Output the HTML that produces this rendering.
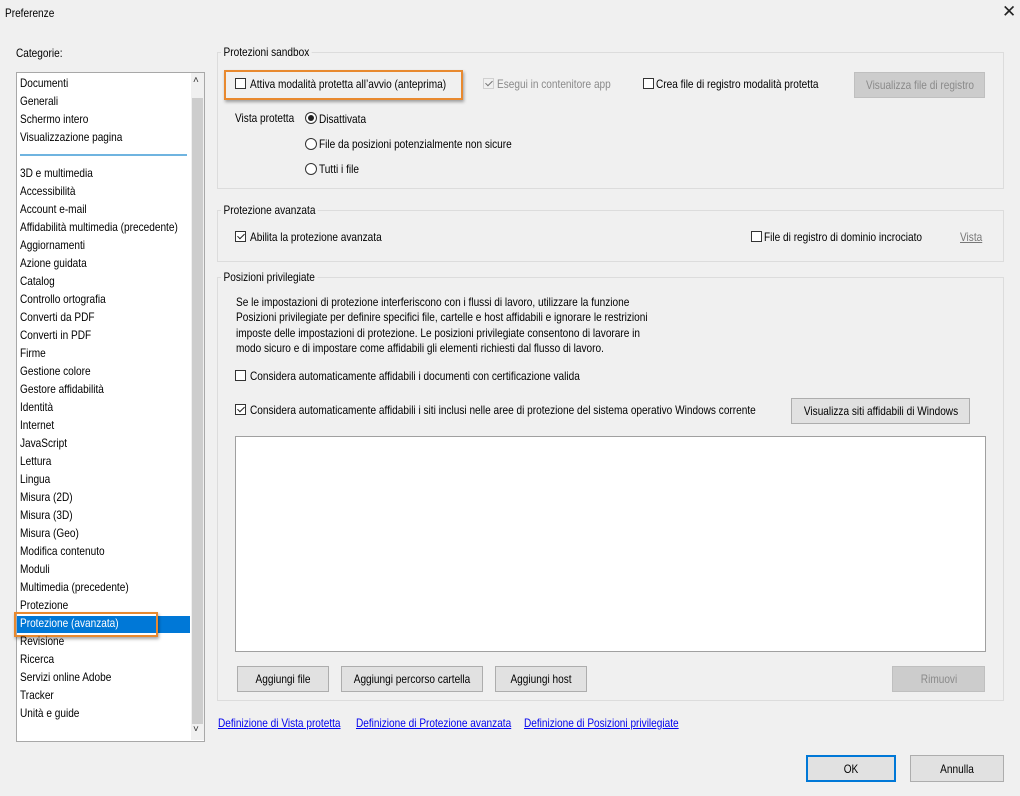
<!DOCTYPE html>
<html><head><meta charset="utf-8"><style>
body{margin:0;width:1020px;height:796px;background:#f0f0f0;position:relative;overflow:hidden;font-family:"Liberation Sans",sans-serif;font-size:12px;color:#000}
.t{position:absolute;white-space:nowrap;line-height:14px;transform:scaleX(.84);transform-origin:0 50%}
.g{position:absolute;border:1px solid #dcdcdc;box-sizing:border-box}
.gl{background:#f0f0f0;padding:0 3px}
.cb{position:absolute;width:11px;height:11px;border:1px solid #333;background:#fff;box-sizing:border-box}
.cb.c::after{content:"";position:absolute;left:3px;top:0px;width:3px;height:6px;border:solid #222;border-width:0 1.5px 1.5px 0;transform:rotate(45deg)}
.rb{position:absolute;width:12px;height:12px;border:1px solid #333;border-radius:50%;background:#fff;box-sizing:border-box}
.rb.c::after{content:"";position:absolute;left:2px;top:2px;width:6px;height:6px;border-radius:50%;background:#222}
.btn{position:absolute;background:#e1e1e1;border:1px solid #adadad;box-sizing:border-box}
.btn .t{top:50%;left:50%;transform:translate(-50%,-50%) scaleX(.84);transform-origin:50% 50%}
.dis{background:#cccccc;border-color:#bfbfbf;color:#8a8a8a}
.lk{color:#0000ee;text-decoration:underline}
.hl{position:absolute;border:2px solid #e8892f;box-shadow:1px 2px 3px rgba(0,0,0,.35);box-sizing:border-box}
</style></head><body>
<div class="t" style="left:5px;top:6px">Preferenze</div>
<div style="position:absolute;left:1002px;top:2px;font-size:17px;color:#222">✕</div>
<div class="t" style="left:16px;top:46px">Categorie:</div>

<div style="position:absolute;left:16px;top:72px;width:189px;height:670px;background:#fff;border:1px solid #a8a8a8;box-sizing:border-box"></div>
<div style="position:absolute;left:191px;top:73px;width:13px;height:667px;background:#f0f0f0"></div>
<div style="position:absolute;left:192px;top:98px;width:11px;height:626px;background:#cdcdcd"></div>
<div style="position:absolute;left:193px;top:75px;font-size:10px;color:#333">˄</div>
<div style="position:absolute;left:193px;top:724px;font-size:10px;color:#333">˅</div>
<div style="position:absolute;left:20px;top:154px;width:167px;height:2px;background:#6fb4e0"></div>
<div style="position:absolute;left:17px;top:616px;width:173px;height:17px;background:#0078d7"></div>
<div class="hl" style="left:14px;top:612px;width:144px;height:25px"></div>
<div id="list"></div>

<div class="g" style="left:217px;top:52px;width:787px;height:137px"></div>
<div class="t gl" style="left:221px;top:45px">Protezioni sandbox</div>
<div class="hl" style="left:224px;top:70px;width:239px;height:30px"></div>
<div class="cb" style="left:235px;top:78px"></div><div class="t" style="left:250px;top:77px">Attiva modalità protetta all’avvio (anteprima)</div>
<div class="cb c" style="left:483px;top:78px;border-color:#bbb;background:#f0f0f0;opacity:.6"></div><div class="t" style="left:497px;top:77px;color:#8a8a8a">Esegui in contenitore app</div>
<div class="cb" style="left:643px;top:78px"></div><div class="t" style="left:656px;top:77px">Crea file di registro modalità protetta</div>
<div class="btn dis" style="left:854px;top:72px;width:131px;height:26px"><div class="t">Visualizza file di registro</div></div>
<div class="t" style="left:235px;top:111px">Vista protetta</div>
<div class="rb c" style="left:305px;top:112px"></div><div class="t" style="left:319px;top:112px">Disattivata</div>
<div class="rb" style="left:305px;top:138px"></div><div class="t" style="left:319px;top:137px">File da posizioni potenzialmente non sicure</div>
<div class="rb" style="left:305px;top:163px"></div><div class="t" style="left:319px;top:162px">Tutti i file</div>

<div class="g" style="left:217px;top:210px;width:787px;height:52px"></div>
<div class="t gl" style="left:221px;top:203px">Protezione avanzata</div>
<div class="cb c" style="left:235px;top:231px"></div><div class="t" style="left:250px;top:230px">Abilita la protezione avanzata</div>
<div class="cb" style="left:751px;top:231px"></div><div class="t" style="left:764px;top:230px">File di registro di dominio incrociato</div>
<div class="t lk" style="left:960px;top:230px;color:#777">Vista</div>

<div class="g" style="left:217px;top:277px;width:787px;height:424px"></div>
<div class="t gl" style="left:221px;top:270px">Posizioni privilegiate</div>
<div class="t" style="left:236px;top:295px;line-height:15.3px">Se le impostazioni di protezione interferiscono con i flussi di lavoro, utilizzare la funzione<br>Posizioni privilegiate per definire specifici file, cartelle e host affidabili e ignorare le restrizioni<br>imposte delle impostazioni di protezione. Le posizioni privilegiate consentono di lavorare in<br>modo sicuro e di impostare come affidabili gli elementi richiesti dal flusso di lavoro.</div>
<div class="cb" style="left:235px;top:370px"></div><div class="t" style="left:250px;top:369px">Considera automaticamente affidabili i documenti con certificazione valida</div>
<div class="cb c" style="left:235px;top:404px"></div><div class="t" style="left:250px;top:403px">Considera automaticamente affidabili i siti inclusi nelle aree di protezione del sistema operativo Windows corrente</div>
<div class="btn" style="left:791px;top:398px;width:179px;height:26px"><div class="t">Visualizza siti affidabili di Windows</div></div>
<div style="position:absolute;left:235px;top:436px;width:751px;height:216px;background:#fff;border:1px solid #a0a0a0;box-sizing:border-box"></div>
<div class="btn" style="left:237px;top:666px;width:92px;height:26px"><div class="t">Aggiungi file</div></div>
<div class="btn" style="left:341px;top:666px;width:142px;height:26px"><div class="t">Aggiungi percorso cartella</div></div>
<div class="btn" style="left:495px;top:666px;width:92px;height:26px"><div class="t">Aggiungi host</div></div>
<div class="btn dis" style="left:892px;top:666px;width:93px;height:26px"><div class="t">Rimuovi</div></div>

<div class="t lk" style="left:218px;top:716px">Definizione di Vista protetta</div>
<div class="t lk" style="left:356px;top:716px">Definizione di Protezione avanzata</div>
<div class="t lk" style="left:524px;top:716px">Definizione di Posizioni privilegiate</div>

<div class="btn" style="left:806px;top:755px;width:90px;height:27px;border:2px solid #0078d7"><div class="t">OK</div></div>
<div class="btn" style="left:910px;top:755px;width:94px;height:27px"><div class="t">Annulla</div></div>

<script>
var a=["Documenti","Generali","Schermo intero","Visualizzazione pagina",null,"3D e multimedia","Accessibilità","Account e-mail","Affidabilità multimedia (precedente)","Aggiornamenti","Azione guidata","Catalog","Controllo ortografia","Converti da PDF","Converti in PDF","Firme","Gestione colore","Gestore affidabilità","Identità","Internet","JavaScript","Lettura","Lingua","Misura (2D)","Misura (3D)","Misura (Geo)","Modifica contenuto","Moduli","Multimedia (precedente)","Protezione","Protezione (avanzata)","Revisione","Ricerca","Servizi online Adobe","Tracker","Unità e guide"];
var h="";a.forEach(function(s,i){if(!s)return;var y=83+i*18-7;h+='<div class="t" style="left:20px;top:'+y+'px'+(s=="Protezione (avanzata)"?';color:#fff':'')+'">'+s+'</div>';});
document.getElementById("list").outerHTML=h;
</script>
</body></html>
